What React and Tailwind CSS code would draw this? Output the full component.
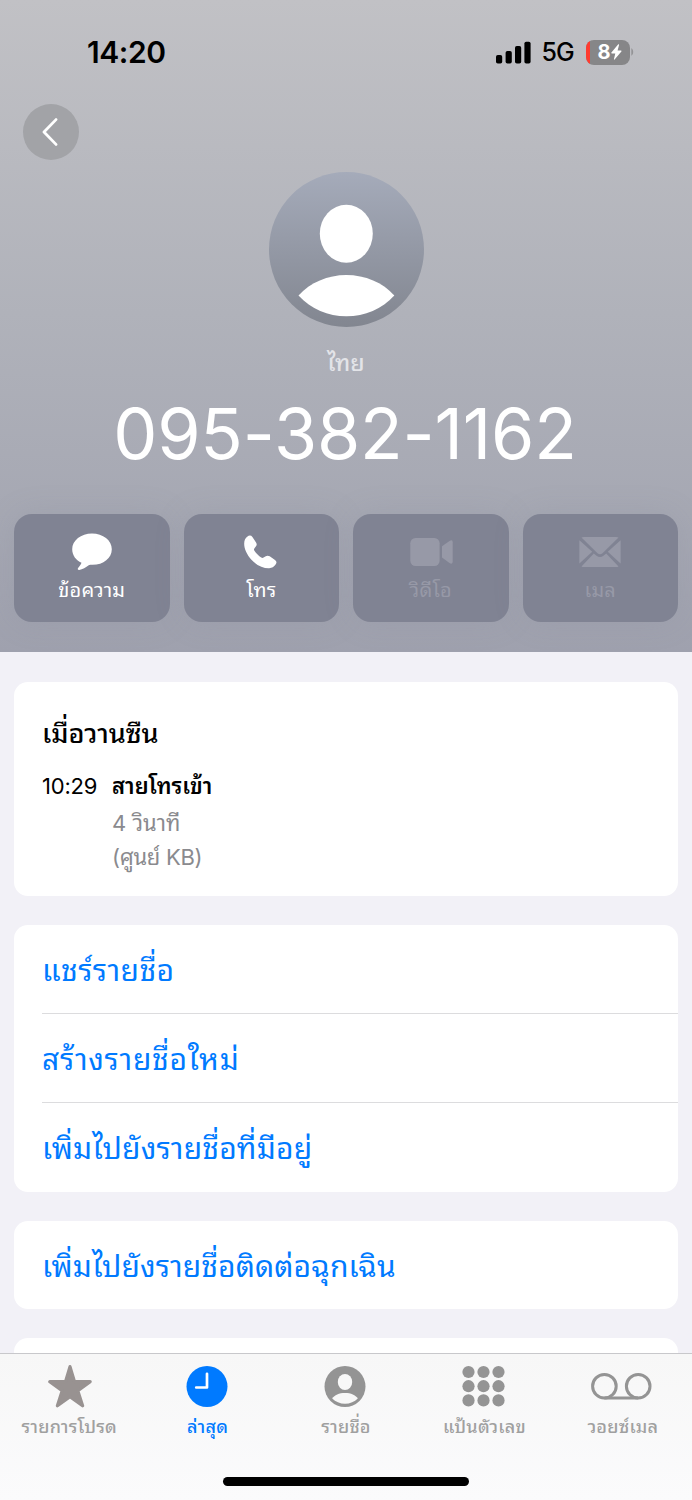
import clsx from "clsx";

function SignalIcon() {
  return (
    <svg width="35" height="23" viewBox="0 0 35 23" className="fill-black">
      <rect x="0" y="14" width="6.2" height="8.5" rx="1.8" />
      <rect x="9.6" y="10" width="6.2" height="12.5" rx="1.8" />
      <rect x="19" y="5" width="6.2" height="17.5" rx="1.8" />
      <rect x="28.4" y="0.8" width="6.2" height="21.7" rx="1.8" />
    </svg>
  );
}

function BatteryIcon() {
  return (
    <div className="flex items-center">
      <div className="flex h-[25px] w-[44px] overflow-hidden rounded-[8px] bg-[#868688]">
        <div className="w-[4px] bg-[#ff3b30]" />
        <div className="flex flex-1 items-center justify-center pr-[1px] text-[20px] leading-none font-bold text-white">
          8
          <svg width="11" height="16" viewBox="0 0 11 16" className="fill-white">
            <path d="M7.3 0.3 L0.4 8.6 Q0 9.4 0.9 9.4 H4.3 L2.9 15.3 Q3 15.9 3.6 15.5 L10.4 7.4 Q10.8 6.6 10 6.5 H6.6 L8.1 0.8 Q8 -0.1 7.3 0.3Z" />
          </svg>
        </div>
      </div>
      <svg width="3" height="8" viewBox="0 0 3 8" className="ml-[1px] fill-[#939396]">
        <path d="M0.3 0.3 C2.8 1.2 2.8 6.8 0.3 7.7Z" />
      </svg>
    </div>
  );
}

function Avatar() {
  return (
    <svg width="155" height="155" viewBox="0 0 155 155">
      <defs>
        <linearGradient id="avatar" x1="0" y1="0" x2="0" y2="1">
          <stop offset="0" stopColor="#a5abba" />
          <stop offset="1" stopColor="#828690" />
        </linearGradient>
      </defs>
      <circle cx="77.5" cy="77.5" r="77.5" fill="url(#avatar)" />
      <ellipse cx="77.3" cy="61.7" rx="26.5" ry="29" fill="#fff" />
      <path
        d="M29.5 123.5 C41 110.5 59 103 77.3 103 C96 103 114 110.5 125.3 123.5 C113 137 96 144.3 77.3 144.3 C59 144.3 42 137 29.5 123.5Z"
        fill="#fff"
      />
    </svg>
  );
}

function MessageIcon() {
  return (
    <svg width="40" height="38" viewBox="0 0 40 38" fill="currentColor">
      <path d="M20 0.5 C31 0.5 39.8 7.4 39.8 16.2 C39.8 25 31.5 31.8 20.5 31.8 C18.8 31.8 17.6 31.8 16.7 32.2 C14 34 10.5 36.5 7.2 37 C5.7 37.1 5.4 35.8 6.1 35 C7.4 33.6 8.7 31.8 9.5 29.8 C4 27.3 0.2 22.5 0.2 16.3 C0.2 7.4 9 0.5 20 0.5Z" />
    </svg>
  );
}

function PhoneIcon() {
  return (
    <svg width="33" height="34" viewBox="0 0 33 34" fill="currentColor" className="mr-[2px]">
      <path d="M7.7 25 C2.6 19.7 0 13.3 0.2 8.3 C0.3 5.2 1.2 3.5 3.2 1.8 C5.2 0.1 7 0.2 8.4 2 L11.9 7.2 C13.1 9 12.9 10.2 11.8 11.6 L10.5 13.2 C9.8 14.1 9.8 14.8 10.4 15.8 C12.2 18.5 14.8 21 17.2 22.6 C18.2 23.2 18.8 23.2 19.6 22.6 L21.3 21.4 C22.9 20.4 24.2 20.4 25.7 21.3 L31 24.9 C32.8 26.3 32.9 27.8 31.6 29.6 C29.9 32 28 33.1 25.2 33.2 C19.5 33.4 13.2 30.6 7.7 25Z" />
    </svg>
  );
}

function VideoIcon() {
  return (
    <svg width="43" height="28" viewBox="0 0 43 28" fill="currentColor" className="ml-[2px]">
      <rect x="0.3" y="0" width="29.3" height="28" rx="5.2" />
      <path d="M32 8.2 L39.5 3 Q42.7 1.2 42.7 4.5 V23.5 Q42.7 26.8 39.5 25 L32 19.5Z" />
    </svg>
  );
}

function MailIcon() {
  return (
    <svg width="42" height="30" viewBox="0 0 42 30" fill="currentColor">
      <path d="M2.5 0.6 Q3.5 0 5 0 H37 Q38.5 0 39.5 0.6 L23.5 16.2 Q21 18.5 18.5 16.2Z" />
      <path d="M0.4 3.3 V26.5 L13.2 14.8Z" />
      <path d="M41.6 3.3 V26.5 L28.8 14.8Z" />
      <path d="M2.5 29.4 L14.8 16.4 L17.5 18.8 Q21 21.3 24.5 18.8 L27.2 16.4 L39.5 29.4 Q38.5 30 37 30 H5 Q3.5 30 2.5 29.4Z" />
    </svg>
  );
}

function StarIcon() {
  return (
    <svg width="46" height="44" viewBox="0 0 46 44" className="ml-[3px]">
      <path
        d="M23 2.6 L27.5 17.6 H43.2 L30.8 26.8 L35.6 41.8 L23 32.6 L10.4 41.8 L15.2 26.8 L2.8 17.6 H18.5Z"
        fill="#989291"
        stroke="#989291"
        strokeWidth="3.2"
        strokeLinejoin="round"
      />
    </svg>
  );
}

function ClockIcon() {
  return (
    <svg width="42" height="42" viewBox="0 0 42 42">
      <circle cx="21" cy="21.5" r="20.5" fill="#007aff" />
      <path d="M21 8.8 V22.5 H10.2" fill="none" stroke="#fff" strokeWidth="2.7" strokeLinecap="round" strokeLinejoin="round" />
    </svg>
  );
}

function ContactIcon() {
  return (
    <svg width="42" height="42" viewBox="0 0 42 42" className="ml-[1px]">
      <circle cx="21" cy="21.5" r="20.5" fill="#949494" />
      <ellipse cx="21" cy="17" rx="7.2" ry="8" fill="#f8f8f8" />
      <path d="M8.2 33.5 C10.5 30 15 28 21 28 C27 28 31.5 30 33.8 33.5 C30.5 36.7 26 38.8 21 38.8 C16 38.8 11.5 36.7 8.2 33.5Z" fill="#f8f8f8" />
    </svg>
  );
}

function KeypadIcon() {
  return (
    <svg width="43" height="42" viewBox="0 0 43 42" fill="#949494">
      {[7, 21.2, 35.4].map((cy) =>
        [6.5, 21.5, 36.5].map((cx) => <circle key={`${cx}-${cy}`} cx={cx} cy={cy} r="6.1" />)
      )}
    </svg>
  );
}

function VoicemailIcon() {
  return (
    <svg width="61" height="42" viewBox="0 0 61 42" fill="none" stroke="#949494" strokeWidth="3">
      <circle cx="13.4" cy="21.2" r="11.8" />
      <circle cx="47.2" cy="21.2" r="11.8" />
      <path d="M13.4 33 H47.2" />
    </svg>
  );
}

const actions = [
  { label: "ข้อความ", icon: MessageIcon },
  { label: "โทร", icon: PhoneIcon },
  { label: "วิดีโอ", icon: VideoIcon, disabled: true },
  { label: "เมล", icon: MailIcon, disabled: true },
];

const contactLinks = [
  { label: "แชร์รายชื่อ", tracking: "tracking-[0.45px]" },
  { label: "สร้างรายชื่อใหม่", tracking: "tracking-[0.75px]" },
  { label: "เพิ่มไปยังรายชื่อที่มีอยู่", tracking: "tracking-[0.2px]" },
];

const tabs = [
  { label: "รายการโปรด", icon: StarIcon },
  { label: "ล่าสุด", icon: ClockIcon, active: true },
  { label: "รายชื่อ", icon: ContactIcon },
  { label: "แป้นตัวเลข", icon: KeypadIcon },
  { label: "วอยซ์เมล", icon: VoicemailIcon },
];

function Header() {
  return (
    <header className="flex h-[652px] shrink-0 flex-col bg-linear-to-b from-[#c1c1c5] via-[#b0b2ba] via-48% to-[#9fa1ae]">
      <div className="flex h-[104px] shrink-0 items-center justify-between pr-[58px] pl-[87px] text-black">
        <span className="text-[30px] font-semibold tracking-[-0.4px]">14:20</span>
        <div className="flex items-center">
          <SignalIcon />
          <span className="mt-[2px] mr-[12px] ml-[10px] text-[25px] font-medium tracking-[-0.8px]">5G</span>
          <BatteryIcon />
        </div>
      </div>
      <button className="ml-[23px] flex size-[56px] shrink-0 items-center justify-center rounded-full bg-[#a2a3a7]">
        <svg width="16" height="28" viewBox="0 0 16 28" className="mr-[3px]">
          <path d="M14 1.6 L2 14 L14 26.4" fill="none" stroke="#fff" strokeWidth="2.8" strokeLinecap="round" strokeLinejoin="round" />
        </svg>
      </button>
      <div className="mt-[12px] flex flex-col items-center">
        <Avatar />
        <p className="mt-[18px] h-[36px] text-[23px] leading-[36px] font-medium text-[#e3e4e8]">ไทย</p>
        <h1 className="mt-[8px] mr-[2px] h-[90px] text-[70px] leading-[90px] tracking-[-0.2px] whitespace-nowrap text-white">
          095-382-1162
        </h1>
      </div>
      <div className="mx-[14px] mt-[35px] grid grid-cols-4 gap-[14px]">
        {actions.map(({ label, icon: Icon, disabled }) => (
          <button
            key={label}
            className={clsx(
              "flex h-[108px] flex-col items-center rounded-[18px] bg-[#808393] pt-[17px] shadow-[0_0_30px_rgba(128,131,147,0.18)]",
              disabled ? "text-[#9799a7]" : "text-white"
            )}
          >
            <span className="flex h-[41px] items-center">
              <Icon />
            </span>
            <span className="text-[20px] leading-[37px] tracking-[0.2px]">{label}</span>
          </button>
        ))}
      </div>
    </header>
  );
}

function TabBar() {
  return (
    <nav className="flex h-[147px] shrink-0 flex-col items-center border-t border-[#c8c8cb] bg-linear-to-b from-[#f7f7f7] to-[#fbfbfc]">
      <div className="grid w-full grid-cols-5">
        {tabs.map(({ label, icon: Icon, active }) => (
          <div key={label} className="flex flex-col items-center pt-[10px]">
            <span className="mr-[2px] flex h-[44px] items-center">
              <Icon />
            </span>
            <span
              className={clsx(
                "mt-[2px] text-[18px] leading-[34px] font-medium tracking-[0.2px] whitespace-nowrap",
                active ? "text-[#007aff]" : "text-[#a0a0a0]"
              )}
            >
              {label}
            </span>
          </div>
        ))}
      </div>
      <div className="mt-auto mb-[14px] h-[9px] w-[246px] rounded-full bg-black" />
    </nav>
  );
}

export default function App() {
  return (
    <div
      lang="th"
      className="flex h-[1500px] w-[692px] flex-col overflow-hidden bg-[#f2f1f7] font-[Inter,'Noto_Sans_Thai_Looped','Noto_Looped_Thai',Loma,Waree,'Noto_Sans_Thai','Noto_Sans',sans-serif]"
    >
      <div className="min-h-0 flex-1 overflow-hidden">
        <Header />
        <main className="flex flex-col gap-[29px] px-[14px] pt-[30px]">
          <section className="h-[214px] rounded-[14px] bg-white px-[28px] pt-[31px] text-[22px] text-black">
            <h2 className="text-[27px] leading-[42px] font-medium">เมื่อวานซืน</h2>
            <div className="mt-[13px] flex">
              <span className="w-[70px] leading-[36px] tracking-[-0.2px]">10:29</span>
              <div>
                <p className="leading-[36px] font-semibold">สายโทรเข้า</p>
                <p className="mt-[2px] leading-[34px] text-[#8a8a8e]">4 วินาที</p>
                <p className="leading-[34px] tracking-[-0.3px] text-[#8a8a8e]">(ศูนย์ KB)</p>
              </div>
            </div>
          </section>
          <section className="rounded-[14px] bg-white pl-[28px] text-[30px] text-[#007aff]">
            {contactLinks.map(({ label, tracking }) => (
              <p key={label} className={clsx("h-[89px] border-b border-[#dcdcde] leading-[90px] last:border-b-0", tracking)}>
                {label}
              </p>
            ))}
          </section>
          <section className="h-[88px] rounded-[14px] bg-white pl-[28px] text-[30px] leading-[90px] tracking-[0.1px] text-[#007aff]">
            เพิ่มไปยังรายชื่อติดต่อฉุกเฉิน
          </section>
          <section className="h-[88px] rounded-[14px] bg-white" />
        </main>
      </div>
      <TabBar />
    </div>
  );
}
